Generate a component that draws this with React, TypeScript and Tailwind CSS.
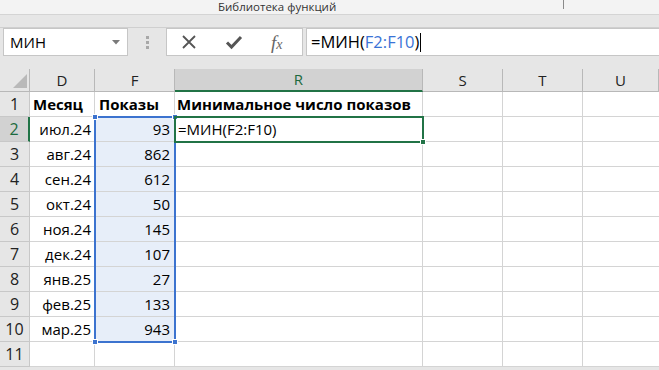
import React from "react"

const rows: [string, string][] = [
  ["июл.24", "93"],
  ["авг.24", "862"],
  ["сен.24", "612"],
  ["окт.24", "50"],
  ["ноя.24", "145"],
  ["дек.24", "107"],
  ["янв.25", "27"],
  ["фев.25", "133"],
  ["мар.25", "943"],
]

const cols = ["D", "F", "R", "S", "T", "U"]

export default function App() {
  const font = { fontFamily: '"Open Sans", "Liberation Sans", sans-serif' }

  return (
    <div className="w-[659px] h-[370px] overflow-hidden bg-[#e6e6e6] text-[#000]" style={font}>
      {/* ribbon remnant */}
      <div className="relative h-[15px] bg-[#f3f3f3] border-b border-[#d4d4d4] flex items-start pl-[218px]">
        <span className="text-[11.5px] leading-[14px] text-[#333]">Библиотека функций</span>
        <div className="absolute left-[563px] top-0 h-[9px] w-px bg-[#8a8a8a]" />
      </div>

      {/* formula bar */}
      <div className="h-[13px] border-b border-[#cfcfcf]" />
      <div className="flex h-[28px] items-stretch">
        <div className="ml-[3px] w-[125px] bg-white border border-[#c6c6c6] flex items-center justify-between pl-[6px] pr-[7px]">
          <span className="text-[15px]">МИН</span>
          <svg width="8" height="5" viewBox="0 0 8 5"><path d="M0 0h8L4 4.5z" fill="#7a7a7a" /></svg>
        </div>
        <div className="w-[38px] flex flex-col items-center justify-center gap-[2px]">
          <span className="w-[3px] h-[3px] bg-[#a8a8a8]" />
          <span className="w-[3px] h-[3px] bg-[#a8a8a8]" />
          <span className="w-[3px] h-[3px] bg-[#a8a8a8]" />
        </div>
        <div className="w-[137px] bg-white border border-[#c6c6c6] flex items-center pl-[14px] gap-[28px]">
          <svg width="16" height="16" viewBox="0 0 16 16"><path d="M2 2l12 12M14 2L2 14" stroke="#555" strokeWidth="1.8" /></svg>
          <svg width="18" height="16" viewBox="0 0 18 16"><path d="M2 8.5l4.5 4.5L16 3" stroke="#555" strokeWidth="3" fill="none" /></svg>
          <span className="text-[19px] italic text-[#666] leading-none" style={{ fontFamily: '"Liberation Serif", serif' }}>f<span className="text-[14px]">x</span></span>
        </div>
        <div className="ml-[3px] flex-1 bg-white border-y border-l border-[#c6c6c6] flex items-center pl-[4px] text-[16.5px]">
          <span>=МИН(</span>
          <span className="text-[#3a73d6]">F2:F10</span>
          <span>)</span>
          <span className="ml-[1px] w-px h-[19px] bg-[#000]" />
        </div>
      </div>

      {/* sheet */}
      <div className="mt-[13px] relative grid grid-cols-[30px_65px_80px_248px_80px_80px_76px] grid-rows-[23px_repeat(11,25px)] bg-white">
        {/* column headers */}
        <div className="bg-[#e6e6e6] border-r border-b border-[#b8b8b8] relative overflow-hidden">
          <svg className="absolute right-[2px] bottom-[3px]" width="14" height="14" viewBox="0 0 14 14"><path d="M14 0v14H0z" fill="#b9b9b9" /></svg>
        </div>
        {cols.map((c) => (
          <div
            key={c}
            className={
              c === "R"
                ? "bg-[#d2d2d2] border-r border-[#b8b8b8] border-b-2 border-b-[#217346] flex items-center justify-center text-[15px] text-[#1c6a3e]"
                : "bg-[#e6e6e6] border-r border-b border-[#b8b8b8] flex items-center justify-center text-[15px] text-[#222]"
            }
          >
            {c}
          </div>
        ))}

        {/* row 1 */}
        <div className="bg-[#e6e6e6] border-r border-b border-[#c8c8c8] flex items-center justify-center text-[16px] text-[#222]">1</div>
        <div className="border-r border-b border-[#d4d4d4] flex items-center pl-[3px] text-[15px] font-bold">Месяц</div>
        <div className="border-r border-b border-[#d4d4d4] flex items-center pl-[4px] text-[15px] font-bold">Показы</div>
        <div className="border-r border-b border-[#d4d4d4] flex items-center pl-[2px] text-[15px] font-bold whitespace-nowrap">Минимальное число показов</div>
        <div className="border-r border-b border-[#d4d4d4]" />
        <div className="border-r border-b border-[#d4d4d4]" />
        <div className="border-b border-[#d4d4d4]" />

        {rows.map(([m, v], i) => (
          <React.Fragment key={m}>
            <div
              className={
                i === 0
                  ? "bg-[#d2d2d2] border-r-2 border-r-[#217346] border-b border-[#c8c8c8] flex items-center justify-center text-[16px] text-[#1c6a3e]"
                  : "bg-[#e6e6e6] border-r border-b border-[#c8c8c8] flex items-center justify-center text-[16px] text-[#222]"
              }
            >
              {i + 2}
            </div>
            <div className="border-r border-b border-[#d4d4d4] flex items-center justify-end pr-[3px] text-[15px]">{m}</div>
            <div className="bg-[#e7eef9] border-r border-b border-[#d4d4d4] flex items-center justify-end pr-[4px] text-[15px]">{v}</div>
            <div className="border-r border-b border-[#d4d4d4] flex items-center pl-[3px] text-[15px]">
              {i === 0 ? "=МИН(F2:F10)" : ""}
            </div>
            <div className="border-r border-b border-[#d4d4d4]" />
            <div className="border-r border-b border-[#d4d4d4]" />
            <div className="border-b border-[#d4d4d4]" />
          </React.Fragment>
        ))}

        {/* row 11 */}
        <div className="bg-[#e6e6e6] border-r border-b border-[#c8c8c8] flex items-center justify-center text-[16px] text-[#222]">11</div>
        <div className="border-r border-b border-[#d4d4d4]" />
        <div className="border-r border-b border-[#d4d4d4]" />
        <div className="border-r border-b border-[#d4d4d4]" />
        <div className="border-r border-b border-[#d4d4d4]" />
        <div className="border-r border-b border-[#d4d4d4]" />
        <div className="border-b border-[#d4d4d4]" />

        {/* F2:F10 range highlight */}
        <div className="absolute left-[94px] top-[47px] w-[82px] h-[227px] border-2 border-[#3c73cf] pointer-events-none">
          <span className="absolute -left-[4px] -top-[4px] w-[6px] h-[6px] bg-[#3c73cf] border border-white" />
          <span className="absolute -right-[4px] -top-[4px] w-[6px] h-[6px] bg-[#3c73cf] border border-white" />
          <span className="absolute -left-[4px] -bottom-[4px] w-[6px] h-[6px] bg-[#3c73cf] border border-white" />
          <span className="absolute -right-[4px] -bottom-[4px] w-[6px] h-[6px] bg-[#3c73cf] border border-white" />
        </div>

        {/* active cell R2 */}
        <div className="absolute left-[174px] top-[47px] w-[250px] h-[27px] border-2 border-[#217346] pointer-events-none">
          <span className="absolute -right-[4px] -bottom-[4px] w-[6px] h-[6px] bg-[#217346] border border-white" />
        </div>
      </div>
    </div>
  )
}
